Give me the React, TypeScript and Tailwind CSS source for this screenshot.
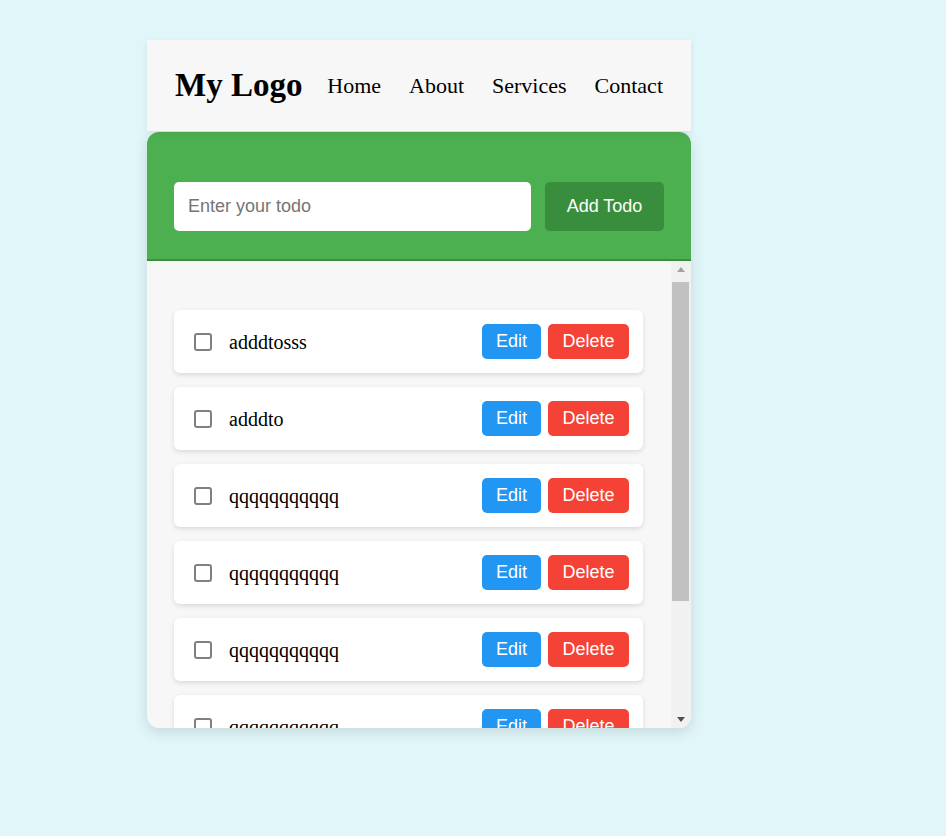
const todos = [
  "adddtosss",
  "adddto",
  "qqqqqqqqqqq",
  "qqqqqqqqqqq",
  "qqqqqqqqqqq",
  "qqqqqqqqqqq",
  "qqqqqqqqqqq",
];

const navLinks = ["Home", "About", "Services", "Contact"];

const TodoItem = ({ text }: { text: string }) => {
  return (
    <div className="bg-white rounded-md shadow-[0_2px_5px_rgba(0,0,0,0.12)] pl-5 pr-[14px] py-[14px] flex items-center">
      <input
        type="checkbox"
        className="appearance-none w-[18px] h-[18px] m-0 shrink-0 border-2 border-[#808080] rounded-[3px] bg-white"
      />
      <span className="ml-[17px] grow text-[20px] text-black font-['Liberation_Serif',serif] leading-none">
        {text}
      </span>
      <div className="flex gap-[7px] font-['Liberation_Sans',Arial,sans-serif] text-[18px] text-white">
        <button className="h-[35px] w-[59px] rounded-[5px] bg-[#2196f3]">
          Edit
        </button>
        <button className="h-[35px] w-[81px] rounded-[5px] bg-[#f44336]">
          Delete
        </button>
      </div>
    </div>
  );
};

// classic scrollbar, drawn since the headless browser uses overlay ones
const ScrollBar = () => {
  return (
    <div className="w-[20px] shrink-0 bg-[#f1f1f1] flex flex-col pl-px pr-[2px]">
      <div className="h-[17px] flex items-center justify-center">
        <svg width="8" height="5" viewBox="0 0 8 5">
          <path d="M0 5 L4 0 L8 5 Z" fill="#a3a3a3" />
        </svg>
      </div>
      <div className="mt-[4px] h-[319px] bg-[#c1c1c1]" />
      <div className="grow" />
      <div className="h-[17px] flex items-center justify-center">
        <svg width="8" height="5" viewBox="0 0 8 5">
          <path d="M0 0 L8 0 L4 5 Z" fill="#505050" />
        </svg>
      </div>
    </div>
  );
};

const App = () => {
  return (
    <div className="min-h-[836px] bg-[#e0f6f8] pt-10 pl-[147px]">
      <div className="w-[544px]">
        <header className="h-[91px] bg-[#f7f7f7] shadow-[0_2px_6px_rgba(0,0,0,0.08)] px-7 flex items-center justify-between font-['Liberation_Serif',serif] text-black relative z-10">
          <div className="text-[33px] font-bold">My Logo</div>
          <nav className="flex gap-7 text-[22px]">
            {navLinks.map((link) => (
              <a key={link} href="#">
                {link}
              </a>
            ))}
          </nav>
        </header>
        <div className="mt-px rounded-xl overflow-hidden shadow-[0_4px_14px_rgba(0,0,0,0.12)] bg-[#f7f7f7]">
          <div className="bg-[#4caf50] border-b-2 border-[#388e3c] pt-[50px] pb-[28px] px-[27px] flex gap-[14px] font-['Liberation_Sans',Arial,sans-serif]">
            <input
              type="text"
              placeholder="Enter your todo"
              className="w-[357px] h-[49px] rounded-[5px] bg-white px-[14px] text-[18px] placeholder:text-[#757575] outline-none"
            />
            <button className="w-[119px] h-[49px] rounded-[5px] bg-[#388e3c] text-white text-[18px]">
              Add Todo
            </button>
          </div>
          <div className="h-[467px] flex">
            <div className="grow overflow-hidden">
              <div className="pt-[49px] pl-[27px] pr-[28px] pb-[27px] flex flex-col gap-[14px]">
                {todos.map((todo, i) => (
                  <TodoItem key={i} text={todo} />
                ))}
              </div>
            </div>
            <ScrollBar />
          </div>
        </div>
      </div>
    </div>
  );
};

export default App;
